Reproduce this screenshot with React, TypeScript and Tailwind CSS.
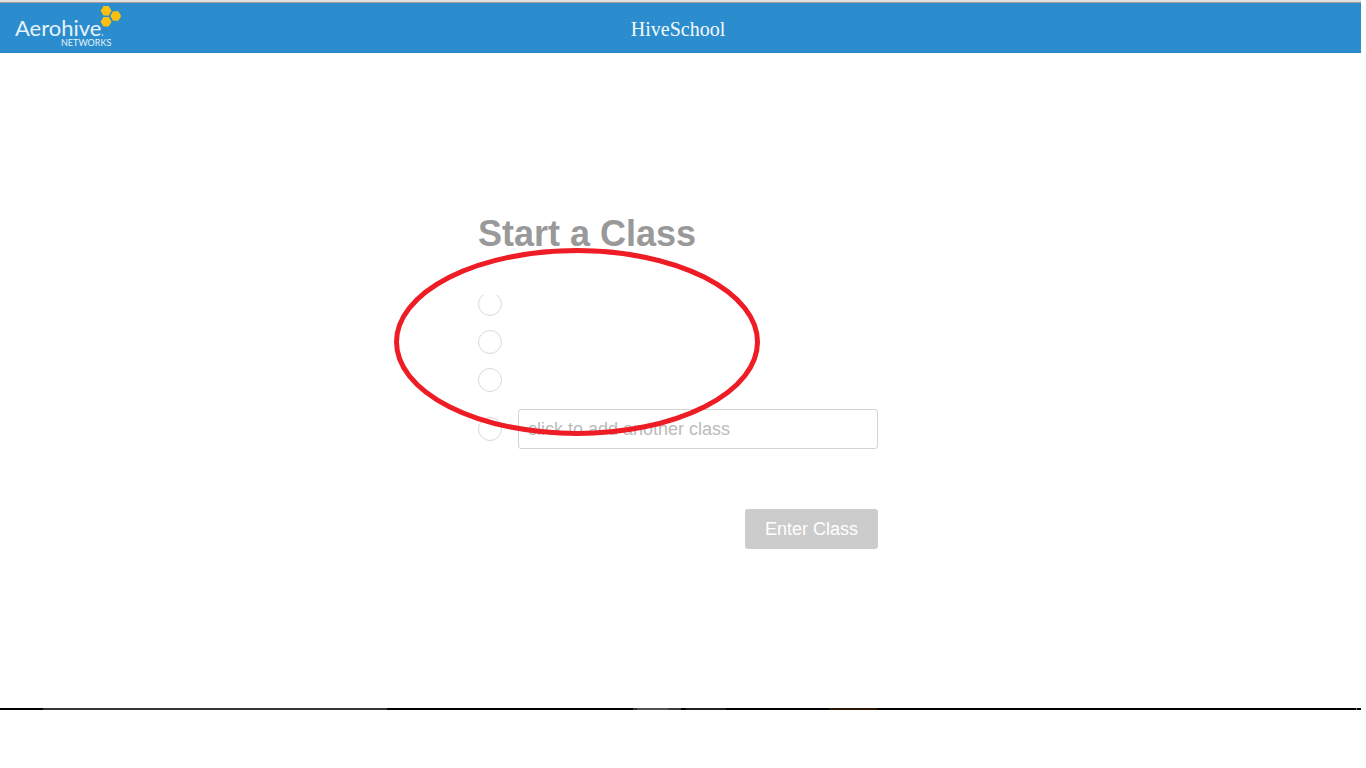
import React from "react";

const savedClasses = ["Class 1", "Class 2", "Class 3"];

const radioStyle =
  "block size-6 shrink-0 cursor-pointer appearance-none rounded-full border border-[#d9d9d9] bg-white checked:border-8 checked:border-[#2b8dcd]";

function Logo() {
  return (
    <svg
      role="img"
      aria-label="Aerohive Networks"
      className="block h-[50px] w-[130px]"
      viewBox="0 0 130 50"
    >
      <g fill="#fdc010">
        <path d="M103.5 3h5.2l2.8 4.8-2.8 4.8h-5.2l-2.8-4.8z" />
        <path d="M113.1 8.2h5.2l2.8 4.8-2.8 4.8h-5.2l-2.8-4.8z" />
        <path d="M103.5 14h5.2l2.8 4.8-2.8 4.8h-5.2l-2.8-4.8z" />
      </g>
      <g fill="#e6f2fa" className="font-['Lato',sans-serif]">
        <text x="15" y="33" fontSize="22">
          Aerohive
        </text>
        <text x="61" y="43" fontSize="9">
          NETWORKS
        </text>
      </g>
      <circle cx="102.5" cy="32" r="0.8" fill="#e6f2fa" />
    </svg>
  );
}

function Header() {
  return (
    <header className="grid h-[53px] grid-cols-[1fr_auto_1fr] items-center border-t-2 border-[#e1e1e1] bg-[#2b8dcd] pr-[5px] shadow-[inset_0_1px_0_#a0a0a0,inset_0_-1px_0_#2484c6]">
      <a href="#home" className="justify-self-start">
        <Logo />
      </a>
      <span className="pt-0.5 font-['Liberation_Serif',serif] text-[20px] leading-6 text-[#f4f9fd]">
        HiveSchool
      </span>
    </header>
  );
}

function Annotation() {
  return (
    <svg
      aria-hidden="true"
      className="pointer-events-none absolute top-[34px] -left-[84px] h-[188px] w-[366px]"
      viewBox="0 0 366 188"
      fill="none"
    >
      <ellipse cx="183" cy="94" rx="180.5" ry="91.5" stroke="#ee1c24" strokeWidth="5" />
    </svg>
  );
}

function ClassForm() {
  return (
    <form
      className="relative mx-auto w-[400px]"
      onSubmit={(event) => event.preventDefault()}
    >
      <h1 className="text-[36px] leading-10 font-bold text-[#999999]">Start a Class</h1>
      <div className="mt-[41px] overflow-hidden">
        <ul className="-mt-[3px] flex flex-col gap-[14px]">
          {savedClasses.map((name) => (
            <li key={name}>
              <input type="radio" name="class" aria-label={name} className={radioStyle} />
            </li>
          ))}
        </ul>
      </div>
      <div className="mt-[17px] flex items-center gap-4">
        <input type="radio" name="class" aria-label="Another class" className={radioStyle} />
        <input
          type="text"
          aria-label="Add another class"
          placeholder="click to add another class"
          className="h-10 min-w-0 flex-1 rounded-[3px] border border-[#d4d4d4] bg-white px-[9px] text-[18px] text-[#666666] placeholder:text-[#bbbbbb]"
        />
      </div>
      <div className="mt-[60px] flex justify-end">
        <button
          type="submit"
          className="h-10 rounded-[3px] bg-[#cccccc] px-5 text-[18px] text-white"
        >
          Enter Class
        </button>
      </div>
      <Annotation />
    </form>
  );
}

function BottomEdge() {
  return (
    <div className="flex h-[2px] bg-black">
      <div className="ml-[43px] w-[344px] bg-[#363636]" />
      <div className="ml-[246px] w-1 bg-[#333333]" />
      <div className="w-[31px] bg-[#555150]" />
      <div className="w-[13px] bg-[#3c3938]" />
      <div className="ml-[5px] w-10 bg-[#231f1e]" />
      <div className="ml-[103px] w-12 bg-[#2a1404]" />
      <div className="mr-1 ml-auto w-px bg-[#777777]" />
    </div>
  );
}

export default function App() {
  return (
    <div className="min-h-screen bg-white pr-[5px] font-['Liberation_Sans',Arial,sans-serif]">
      <Header />
      <main className="pt-[161px] pr-[5px] pb-[159px]">
        <ClassForm />
      </main>
      <BottomEdge />
    </div>
  );
}
